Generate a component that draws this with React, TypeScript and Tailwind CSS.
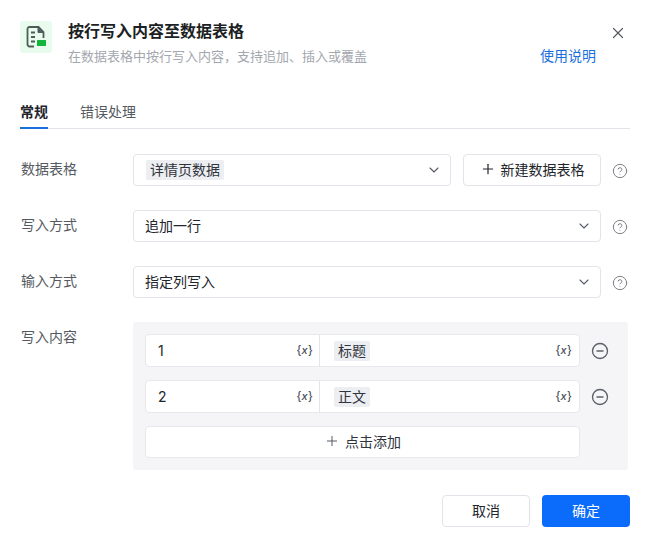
import { ChevronDown, CircleHelp, CircleMinus, Plus, X } from "lucide-react";

const fontStack = "font-['Inter','Noto_Sans_CJK_SC',sans-serif]";

const FileIcon = () => (
    <div className="w-8 h-8 mt-[1px] rounded-[3px] bg-[#e9fbec] flex items-center justify-center">
        <svg width="24" height="24" viewBox="0 0 24 24" fill="none">
            <path d="M10 21.5H5.5a2 2 0 0 1-2-2V4a2 2 0 0 1 2-2h9l5 5v6" stroke="#4d5c5a" strokeWidth="1.8" />
            <path d="M14 2.5V7.5H19" fill="#4d5c5a" stroke="#4d5c5a" strokeWidth="1" />
            <path d="M7 7.5h4M7 12h4M7 16.5h4" stroke="#4d5c5a" strokeWidth="1.8" />
            <rect x="13" y="15" width="9" height="6" rx="0.5" fill="#12b53c" />
        </svg>
    </div>
);

const VarMark = () => (
    <span className="text-[11px] leading-none font-medium text-[#4b515c] tracking-[0.2px]">
        {"{"}<span className="italic">x</span>{"}"}
    </span>
);

const Tag = ({ children }: { children: React.ReactNode }) => (
    <span className="inline-block bg-[#eceef2] rounded-[2px] px-1 py-[1px] leading-[18px] text-[#30343c]">{children}</span>
);

const Help = () => <CircleHelp className="w-4 h-4 text-[#7c7f85] shrink-0" strokeWidth={1.5} />;

const SelectBox = ({ children, className }: { children: React.ReactNode; className: string }) => (
    <div className={`${className} h-8 border border-[#e2e4e9] rounded-[4px] bg-white flex items-center justify-between pl-[11px] pr-[8px]`}>
        <div className="text-[14px] text-[#22252b] -mt-[2px]">{children}</div>
        <ChevronDown className="w-4 h-4 text-[#555b66]" strokeWidth={1.6} />
    </div>
);

const Row = ({ label, children }: { label: string; children: React.ReactNode }) => (
    <div className="flex items-center h-8 mb-6">
        <div className="w-[113px] text-[14px] text-[#555a62] pl-[1px] -mt-[4px]">{label}</div>
        {children}
        <div className="ml-[11px] mt-[2px]">
            <Help />
        </div>
    </div>
);

const MappingRow = ({ index, name }: { index: string; name: string }) => (
    <div className="flex items-center mb-[13px]">
        <div className="w-[435px] h-[33px] bg-white border border-[#e6e8ec] rounded-[4px] flex items-center">
            <div className="w-[174px] h-full border-r border-[#e2e4e9] flex items-center justify-between pl-[12px] pr-[6px]">
                <span className="text-[14px] text-[#22252b]">{index}</span>
                <VarMark />
            </div>
            <div className="flex-1 flex items-center justify-between pl-[14px] pr-[7px] text-[14px]">
                <Tag>{name}</Tag>
                <VarMark />
            </div>
        </div>
        <CircleMinus className="w-[18px] h-[18px] ml-[11px] text-[#5c6068]" strokeWidth={1.8} />
    </div>
);

export default function App() {
    return (
        <div className={`w-[654px] h-[548px] bg-white overflow-hidden px-5 pt-5 ${fontStack}`}>
            <div className="flex">
                <FileIcon />
                <div className="ml-4 flex-1">
                    <div className="flex justify-between items-start">
                        <h1 className="text-[16px] font-semibold leading-[22px] text-[#1c1f24]">按行写入内容至数据表格</h1>
                        <X className="w-[18px] h-[18px] mt-[4px] mr-[7px] text-[#555a62]" strokeWidth={1.6} />
                    </div>
                    <div className="flex justify-between mt-[4px]">
                        <p className="text-[13px] leading-[20px] text-[#a3a7ae]">在数据表格中按行写入内容，支持追加、插入或覆盖</p>
                        <a className="text-[14px] leading-[20px] text-[#1a6fdc] mr-[38px]">使用说明</a>
                    </div>
                </div>
            </div>

            <div className="w-[610px] flex gap-8 mt-[34px] border-b border-[#e2e4e9] h-[29px] text-[14px]">
                <div className="h-[29px] border-b-2 border-[#1a6fdc] font-semibold text-[#22252b] leading-[24px]">常规</div>
                <div className="text-[#555a62] leading-[24px]">错误处理</div>
            </div>

            <div className="mt-[25px]">
                <Row label="数据表格">
                    <SelectBox className="w-[318px]">
                        <div className="ml-px">
                            <Tag>详情页数据</Tag>
                        </div>
                    </SelectBox>
                    <div className="w-[138px] h-8 ml-3 pb-[2px] border border-[#e2e4e9] rounded-[4px] flex items-center justify-center gap-[5px] text-[14px] text-[#22252b]">
                        <Plus className="w-4 h-4" strokeWidth={1.8} />
                        新建数据表格
                    </div>
                </Row>
                <Row label="写入方式">
                    <SelectBox className="w-[468px]">追加一行</SelectBox>
                </Row>
                <Row label="输入方式">
                    <SelectBox className="w-[468px]">指定列写入</SelectBox>
                </Row>
                <div className="flex">
                    <div className="w-[113px] text-[14px] text-[#555a62] pl-[1px] pt-[4px]">写入内容</div>
                    <div className="w-[495px] h-[148px] bg-[#f5f5f8] rounded-[3px] p-3">
                        <MappingRow index="1" name="标题" />
                        <MappingRow index="2" name="正文" />
                        <div className="w-[435px] h-8 pb-[2px] bg-white border border-[#e6e8ec] rounded-[4px] flex items-center justify-center gap-[5px] text-[14px] text-[#30343c]">
                            <Plus className="w-4 h-4 text-[#555a62]" strokeWidth={1.5} />
                            点击添加
                        </div>
                    </div>
                </div>
            </div>

            <div className="w-[610px] flex justify-end gap-3 mt-[25px] text-[14px]">
                <button className="w-[88px] h-8 pb-[2px] border border-[#e2e4e9] rounded-[4px] bg-white text-[#22252b]">取消</button>
                <button className="w-[88px] h-8 pb-[2px] rounded-[4px] bg-[#0b6bfb] text-white">确定</button>
            </div>
        </div>
    );
}
